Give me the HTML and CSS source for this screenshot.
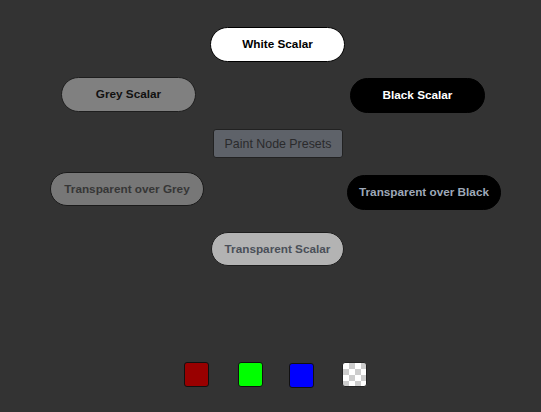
FILE: index.html
```html
<!DOCTYPE html>
<html>
<head>
<meta charset="utf-8">
<link rel="stylesheet" href="styles.css">
</head>
<body>
<div class="canvas">
  <div class="pill pill-white">White Scalar</div>
  <div class="pill pill-grey">Grey Scalar</div>
  <div class="pill pill-black">Black Scalar</div>
  <div class="presets">Paint Node Presets</div>
  <div class="pill pill-tgrey">Transparent over Grey</div>
  <div class="pill pill-tblack">Transparent over Black</div>
  <div class="pill pill-tscalar">Transparent Scalar</div>
  <div class="swatch sw-red"></div>
  <div class="swatch sw-green"></div>
  <div class="swatch sw-blue"></div>
  <div class="swatch sw-checker"></div>
</div>
</body>
</html>
```
FILE: styles.css
```css
html, body {
  margin: 0;
  padding: 0;
  background: #333333;
}
.canvas {
  position: relative;
  width: 541px;
  height: 412px;
  background: #333333;
  font-family: "Liberation Sans", Arial, sans-serif;
}
.pill {
  position: absolute;
  box-sizing: border-box;
  display: flex;
  align-items: center;
  justify-content: center;
  border: 1px solid #111;
  border-radius: 18px;
  font-size: 11.75px;
  font-weight: bold;
  padding-bottom: 2px;
}
.pill-white {
  left: 210px; top: 27px; width: 135px; height: 35px;
  background: #ffffff; color: #000;
  border-color: #000;
}
.pill-grey {
  left: 61px; top: 77px; width: 135px; height: 35px;
  background: #808080; color: #111;
  border-color: #1e1e1e;
}
.pill-black {
  left: 350px; top: 78px; width: 135px; height: 35px;
  background: #000; color: #fff;
  border-color: #000;
}
.presets {
  position: absolute;
  box-sizing: border-box;
  left: 213px; top: 129px; width: 130px; height: 29px;
  display: flex;
  align-items: center;
  justify-content: center;
  background: #5e6269;
  border: 1px solid #222;
  border-radius: 3px;
  color: #2a2a2c;
  font-size: 12.4px;
}
.pill-tgrey {
  left: 50px; top: 172px; width: 154px; height: 34px;
  background: #777777; color: #363636;
  border-color: #1a1a1a;
}
.pill-tblack {
  left: 347px; top: 175px; width: 154px; height: 35px;
  background: #000; color: #9ea8b8;
  border-color: #000;
}
.pill-tscalar {
  left: 211px; top: 232px; width: 133px; height: 34px;
  background: #b3b3b3; color: #4a4f58;
  border-color: #1e1e1e;
}
.swatch {
  position: absolute;
  box-sizing: border-box;
  top: 362px;
  width: 25px; height: 25px;
  border: 1px solid #111;
  border-radius: 3px;
}
.sw-red { left: 184px; background: #990000; }
.sw-green { left: 238px; background: #00ff00; }
.sw-blue { left: 289px; top: 363px; background: #0000ff; }
.sw-checker {
  left: 342px;
  border-color: #222;
  background-color: #ffffff;
  background-image:
    linear-gradient(45deg, #cccccc 25%, transparent 25%, transparent 75%, #cccccc 75%),
    linear-gradient(45deg, #cccccc 25%, transparent 25%, transparent 75%, #cccccc 75%);
  background-size: 12px 12px;
  background-position: 0 0, 6px 6px;
}
```
